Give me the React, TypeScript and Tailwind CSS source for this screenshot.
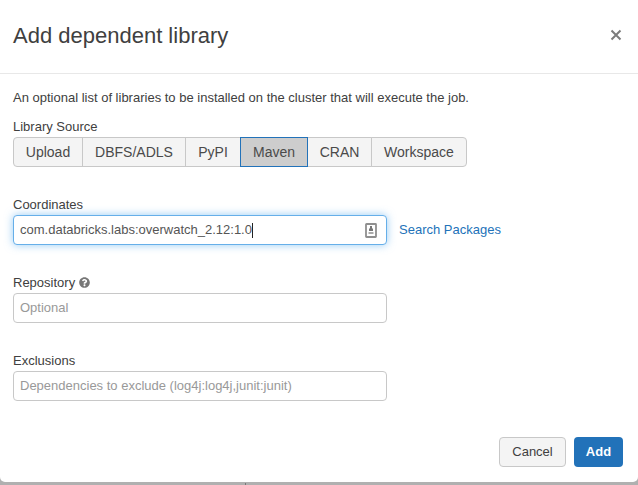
import { FaQuestionCircle } from "react-icons/fa";

const sources = [
  { name: "Upload", width: "w-[70px]" },
  { name: "DBFS/ADLS", width: "w-[104px]" },
  { name: "PyPI", width: "w-[56px]" },
  { name: "Maven", width: "w-[68px]" },
  { name: "CRAN", width: "w-[65px]" },
  { name: "Workspace", width: "w-[96px]" },
];

function SourceTabs() {
  return (
    <div className="flex h-[30px]">
      {sources.map(({ name, width }, i) => (
        <button
          key={name}
          className={`${width} ${i > 0 ? "-ml-px" : "rounded-l"} ${i === sources.length - 1 ? "rounded-r" : ""} ${
            name === "Maven" ? "z-10 border-[#2272b9] bg-[#cdcdcd]" : "border-[#c8c8c8] bg-[#f4f4f4]"
          } shrink-0 border text-center text-[14px] leading-[28px] text-[#4a4a4a]`}
        >
          {name}
        </button>
      ))}
    </div>
  );
}

function AutofillIcon() {
  return (
    <svg className="h-[15px] w-[12px]" viewBox="0 0 12 15">
      <rect x="1" y="1" width="10" height="13" rx=".5" fill="#fff" stroke="#8f8f8f" strokeWidth="1.8" />
      <path d="M5 3h2v2.5h1V8H4V5.500h1z" fill="#777" />
      <path d="M3.500 9h5v2h-5z" fill="#aaa" />
    </svg>
  );
}

export default function App() {
  return (
    <div className="h-[485px] w-[638px] overflow-hidden bg-[#b0b0b0] font-['Liberation_Sans',Arial,sans-serif] text-[13px] leading-[18px] text-[#404040]">
      <div className="flex h-[482px] flex-col rounded-b-[5px] bg-white">
        <header className="flex h-[74px] shrink-0 items-center justify-between border-b border-[#e8e8e8] pr-[16px] pb-[2px] pl-[13px]">
          <h1 className="text-[22px] leading-[30px] text-[#404040]">Add dependent library</h1>
          <svg className="mb-[2px] size-3" viewBox="0 0 12 12" fill="none" stroke="#7c7c7c" strokeWidth="2">
            <path d="M1.500 1.500l9 9M10.500 1.500l-9 9" />
          </svg>
        </header>
        <main className="flex flex-col px-[13px] pt-[15px]">
          <p>An optional list of libraries to be installed on the cluster that will execute the job.</p>
          <div className="pt-[11px]">Library Source</div>
          <div className="pt-px"><SourceTabs /></div>
          <label className="pt-[29px]">Coordinates</label>
          <div className="flex items-center pt-px">
            <div className="flex h-[30px] w-[374px] items-center justify-between rounded border border-[#66afe9] bg-white pr-[9px] pl-[6px] text-[#555] shadow-[0_0_8px_rgba(82,168,236,0.6)]">
              <span className="flex items-center">com.databricks.labs:overwatch_2.12:1.0<span className="h-[15px] w-px bg-[#222]" /></span>
              <AutofillIcon />
            </div>
            <a className="ml-3 text-[#2272b9]">Search Packages</a>
          </div>
          <label className="flex items-center gap-1 pt-[29px]">
            Repository <FaQuestionCircle className="mb-px size-[11px] text-[#777]" />
          </label>
          <div className="mt-px flex h-[30px] w-[374px] items-center rounded border border-[#c8c8c8] pl-[6px] text-[#999]">Optional</div>
          <label className="pt-[29px]">Exclusions</label>
          <div className="mt-px flex h-[30px] w-[374px] items-center rounded border border-[#c8c8c8] pl-[6px] text-[#999]">Dependencies to exclude (log4j:log4j,junit:junit)</div>
        </main>
        <footer className="mt-auto mb-[15px] flex justify-end gap-2 pr-[15px]">
          <button className="h-[30px] w-[67px] rounded border border-[#c8c8c8] bg-[#f4f4f4] text-[#404040]">Cancel</button>
          <button className="h-[30px] w-[49px] rounded bg-[#2272b9] font-bold text-white">Add</button>
        </footer>
      </div>
      <div className="ml-[245px] mt-px h-[2px] w-px bg-[#777]" />
    </div>
  );
}
